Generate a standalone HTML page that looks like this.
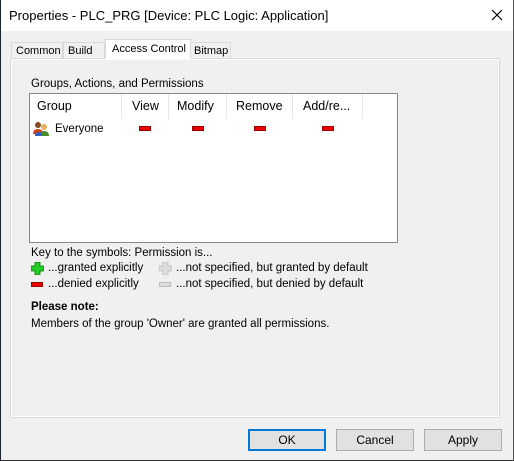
<!DOCTYPE html>
<html><head><style>
*{margin:0;padding:0;box-sizing:border-box}
body{width:514px;height:461px;background:#f0f0f0;font-family:"Liberation Sans",sans-serif;font-size:11.5px;color:#000;position:relative;overflow:hidden}
.a{position:absolute;white-space:nowrap}
.win{position:absolute;left:0;top:0;width:514px;height:461px;border-left:1px solid #1e2530;border-right:1px solid #555;border-bottom:1px solid #333}
.title{position:absolute;left:1px;top:0;width:512px;height:31px;background:#fff}
.tab{position:absolute;border:1px solid #d9d9d9;border-bottom:none;background:#f0f0f0;padding-left:4px;line-height:16px;white-space:nowrap;overflow:hidden;font-size:11px}
.panel{position:absolute;left:10px;top:58px;width:490px;height:360px;background:#f0f0f0;border:1px solid #d9d9d9;box-shadow:inset 1px 1px 0 #fff,inset -1px -1px 0 #fff}
.list{position:absolute;left:29px;top:93px;width:369px;height:150px;background:#fff;border:1px solid #828790}
.sep{position:absolute;top:0;width:1px;height:25px;background:#e5e5e5}
.red{position:absolute;width:12px;height:5px;background:#e00;border:1px solid #900}
.btn{position:absolute;top:429px;width:78px;height:22px;background:#e1e1e1;border:1px solid #adadad;text-align:center;line-height:20px;font-size:12px}
.h{font-size:12.5px}
</style></head><body>
<div class="win"></div>
<div class="title"></div>
<div class="a" style="left:9px;top:8px;font-size:13px">Properties - PLC_PRG [Device: PLC Logic: Application]</div>
<svg class="a" style="left:491px;top:9px" width="12" height="12"><path d="M1 1L11 11M11 1L1 11" stroke="#000" stroke-width="1.2"/></svg>
<div class="panel"></div>
<div class="tab" style="left:11px;top:42px;width:52px;height:16px">Common</div>
<div class="tab" style="left:63px;top:42px;width:42px;height:16px">Build</div>
<div class="tab" style="left:190px;top:42px;width:41px;height:16px;padding-left:3px">Bitmap</div>
<div class="tab" style="left:105px;top:39px;width:86px;height:20px;background:#fff;padding-left:6px;line-height:18px">Access Control</div>
<div class="a" style="left:31px;top:78px">Groups, Actions, and Permissions</div>
<div class="list">
 <div class="a h" style="left:7px;top:5px">Group</div>
 <div class="sep" style="left:91px"></div>
 <div class="a h" style="left:102px;top:5px">View</div>
 <div class="sep" style="left:138px"></div>
 <div class="a h" style="left:147px;top:5px">Modify</div>
 <div class="sep" style="left:196px"></div>
 <div class="a h" style="left:206px;top:5px">Remove</div>
 <div class="sep" style="left:262px"></div>
 <div class="a h" style="left:273px;top:5px">Add/re...</div>
 <div class="sep" style="left:332px"></div>
 <svg class="a" style="left:3px;top:27px" width="16" height="16"><circle cx="5" cy="4" r="3" fill="#8a4a1e"/><path d="M0 13Q0 8 5 8Q10 8 10 13Z" fill="#d04010"/><circle cx="11" cy="6" r="3" fill="#e0b060"/><path d="M6 15Q6 10 11 10Q16 10 16 15Z" fill="#4a8a2a"/><path d="M2 15Q2 11 6 11Q9 11 9 15Z" fill="#3060c0"/></svg>
 <div class="a" style="left:25px;top:29px">Everyone</div>
 <div class="red" style="left:109px;top:32px"></div>
 <div class="red" style="left:162px;top:32px"></div>
 <div class="red" style="left:224px;top:32px"></div>
 <div class="red" style="left:292px;top:32px"></div>
</div>
<div class="a" style="left:31px;top:247px">Key to the symbols: Permission is...</div>
<svg class="a" style="left:31px;top:262px" width="13" height="13"><path d="M4 0H9V4H13V9H9V13H4V9H0V4H4Z" fill="#2c2" stroke="#070" stroke-width="0.8"/></svg>
<div class="a" style="left:48px;top:262px">...granted explicitly</div>
<svg class="a" style="left:159px;top:262px" width="13" height="13"><path d="M4 0H9V4H13V9H9V13H4V9H0V4H4Z" fill="#ddd" stroke="#bbb" stroke-width="0.8"/></svg>
<div class="a" style="left:176px;top:262px">...not specified, but granted by default</div>
<div class="red" style="left:31px;top:282px"></div>
<div class="a" style="left:48px;top:278px">...denied explicitly</div>
<div class="a" style="left:159px;top:282px;width:12px;height:5px;background:#ddd;border:1px solid #bbb"></div>
<div class="a" style="left:176px;top:278px">...not specified, but denied by default</div>
<div class="a" style="left:31px;top:301px;font-weight:bold">Please note:</div>
<div class="a" style="left:31px;top:318px">Members of the group 'Owner' are granted all permissions.</div>
<div class="btn" style="left:248px;border:2px solid #0078d7;line-height:18px">OK</div>
<div class="btn" style="left:336px">Cancel</div>
<div class="btn" style="left:424px">Apply</div>
</body></html>
